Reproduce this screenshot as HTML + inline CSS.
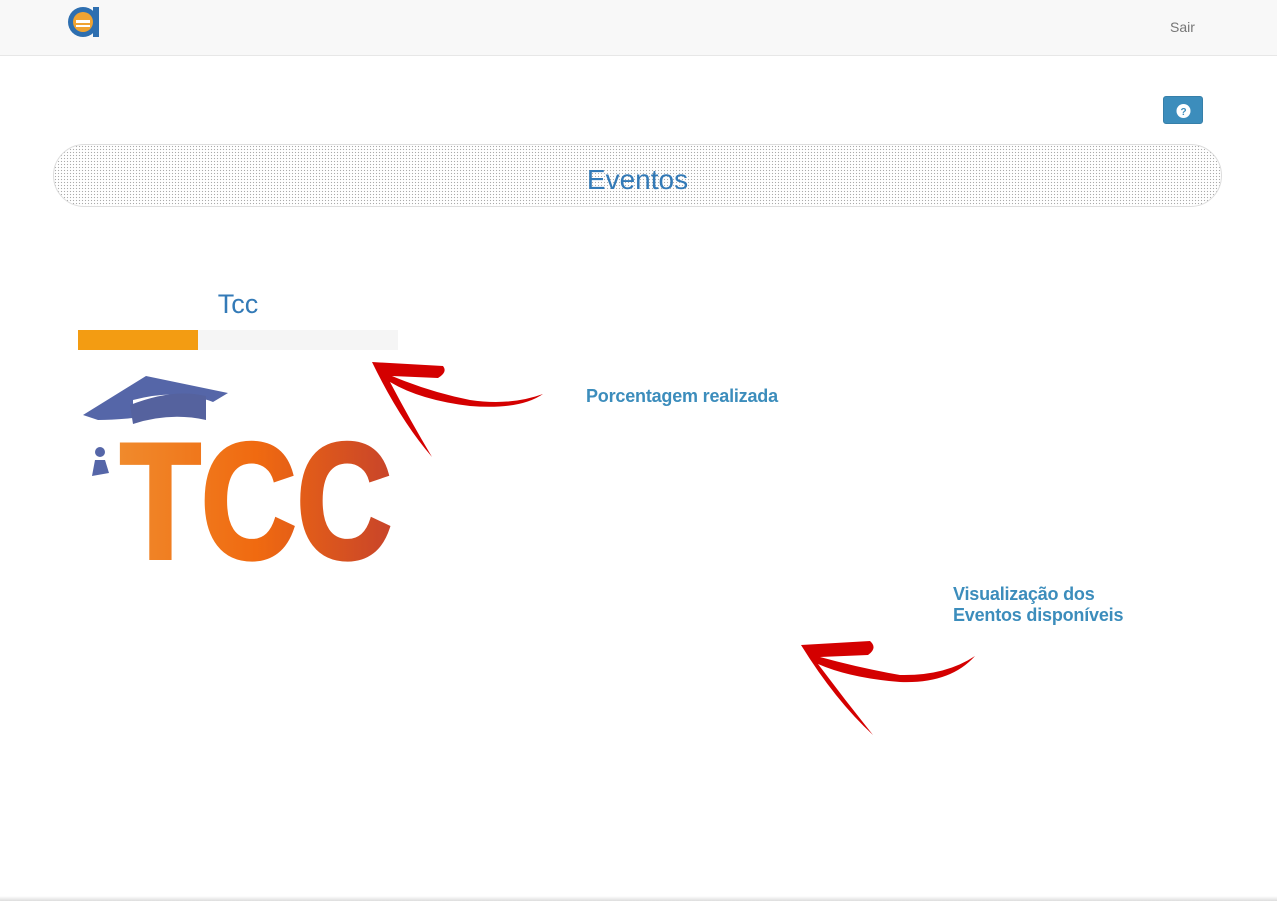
<!DOCTYPE html>
<html><head><meta charset="utf-8"><style>
*{margin:0;padding:0;box-sizing:border-box}
body{width:1277px;height:901px;background:#fff;font-family:"Liberation Sans",sans-serif;position:relative;overflow:hidden}
.nav{position:absolute;left:0;top:0;width:1277px;height:56px;background:#f8f8f8;border-bottom:1px solid #e7e7e7}
.sair{position:absolute;left:1170px;top:19px;font-size:14px;color:#777}
.help{position:absolute;left:1163px;top:96px;width:40px;height:28px;background:#3c8dbc;border:1px solid #367fa9;border-radius:3px}
.box{position:absolute;left:53px;top:144px;width:1169px;height:63px;border-radius:32px;border:1px solid #ddd;
background-color:#fff;background-image:radial-gradient(#aaa 0.7px,transparent 0.8px);background-size:3px 3px}
.box span{position:absolute;left:0;right:0;top:19px;text-align:center;font-size:28px;color:#337ab7}
.tcc{position:absolute;left:78px;top:289px;width:320px;text-align:center;font-size:27px;color:#337ab7}
.bar{position:absolute;left:78px;top:330px;width:320px;height:20px;background:#f5f5f5}
.bar div{width:120px;height:20px;background:#f39c12}
.lbl{position:absolute;font-size:18px;font-weight:bold;color:#3c8dbc;line-height:21px;letter-spacing:-0.2px}
.foot{position:absolute;left:0;top:896px;width:1277px;height:5px;background:linear-gradient(#fff,#ddd)}
</style></head><body>
<div class="nav">
<svg style="position:absolute;left:67px;top:6px" width="32" height="32" viewBox="0 0 32 32">
<rect x="26" y="1" width="6" height="30" fill="#2e6fb0"/>
<circle cx="16" cy="16" r="15" fill="#2e6fb0"/>
<circle cx="16" cy="16" r="10" fill="#f0a331"/>
<rect x="9" y="14" width="14" height="3" fill="#fff"/>
<rect x="9" y="19" width="14" height="2" fill="#fff"/>
</svg>
<div class="sair">Sair</div>
</div>
<div class="help"><svg width="40" height="28" viewBox="0 0 40 28"><circle cx="19.5" cy="14" r="7" fill="#fff"/><text x="19.5" y="18" text-anchor="middle" font-size="10" font-weight="bold" fill="#3c8dbc" font-family="Liberation Sans">?</text></svg></div>
<div class="box"><span>Eventos</span></div>
<div class="tcc">Tcc</div>
<div class="bar"><div></div></div>
<svg style="position:absolute;left:78px;top:360px" width="320" height="240" viewBox="0 0 320 240">
<defs><linearGradient id="g" x1="0" x2="1"><stop offset="0" stop-color="#f08a2c"/><stop offset=".5" stop-color="#f06a10"/><stop offset="1" stop-color="#c8442a"/></linearGradient></defs>
<path d="M5 55 L68 16 L150 33 L135 42 Q100 28 55 40 L55 58 Q35 60 20 60 L20 60 Z" fill="#5566a8"/>
<path d="M52 45 Q95 28 128 36 L128 60 Q92 52 55 64 Z" fill="#55629e"/>
<circle cx="22" cy="92" r="5" fill="#5566a8"/>
<path d="M17 100 L27 100 L31 113 L14 116 Z" fill="#5566a8"/>
<text x="42" y="198" font-size="165" font-weight="bold" fill="url(#g)" stroke="url(#g)" stroke-width="4" font-family="Liberation Sans" textLength="272" lengthAdjust="spacingAndGlyphs">TCC</text>
</svg>
<svg style="position:absolute;left:0;top:0" width="1277" height="901">
<path d="M372 362 L443 366 Q448 372 438 378 L392 376 Q430 392 470 400 Q510 406 543 394 Q520 410 470 406 Q420 400 390 382 Q410 420 432 457 Q400 420 372 362 Z" fill="#d40000"/>
<path d="M801 645 L870 641 Q878 648 868 655 L820 657 Q860 668 900 675 Q945 676 975 656 Q950 684 900 682 Q850 678 818 664 Q845 700 873 735 Q835 700 801 645 Z" fill="#d40000"/>
</svg>
<div class="lbl" style="left:586px;top:386px">Porcentagem realizada</div>
<div class="lbl" style="left:953px;top:584px">Visualização dos<br>Eventos disponíveis</div>
<div class="foot"></div>
</body></html>
